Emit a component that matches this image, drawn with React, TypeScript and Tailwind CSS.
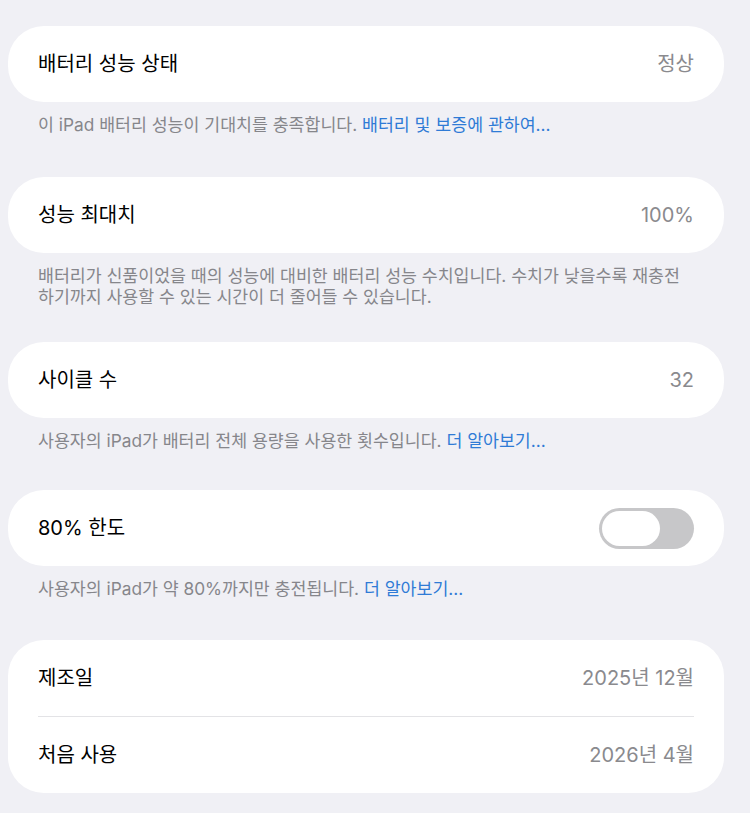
import React from "react";

const FONT = 'Inter, "Noto Sans CJK KR", "Noto Sans", sans-serif';

function Card({ children }: { children: React.ReactNode }) {
  return <div className="bg-white rounded-[36px] px-[30px]">{children}</div>;
}

function Row({ label, value, control }: { label: string; value?: string; control?: React.ReactNode }) {
  return (
    <div className="h-[76px] flex items-center justify-between">
      <span className="text-[20px] text-black">{label}</span>
      {value && <span className="text-[20px] text-[#8a8a8e]">{value}</span>}
      {control}
    </div>
  );
}

function Footer({ text, link }: { text: string; link?: string }) {
  return (
    <p className="px-[30px] pt-[12px] text-[17.3px] leading-[21px] text-[#86868b] break-keep">
      {text}
      {link && <span className="text-[#2f7bd6]"> {link}</span>}
    </p>
  );
}

function Toggle() {
  return (
    <div className="w-[95px] h-[41px] rounded-full bg-[#c7c7c9] p-[3px] flex items-center">
      <div className="w-[58px] h-[35px] rounded-full bg-white" />
    </div>
  );
}

export default function App() {
  return (
    <div className="min-h-[813px] bg-[#f0f0f5] pt-[26px] pl-[8px] pr-[26px]" style={{ fontFamily: FONT }}>
      {/* 성능 상태 */}
      <section className="mb-[42px]">
        <Card>
          <Row label="배터리 성능 상태" value="정상" />
        </Card>
        <Footer text="이 iPad 배터리 성능이 기대치를 충족합니다." link="배터리 및 보증에 관하여..." />
      </section>

      {/* 최대치 */}
      <section className="mb-[35px]">
        <Card>
          <Row label="성능 최대치" value="100%" />
        </Card>
        <Footer text="배터리가 신품이었을 때의 성능에 대비한 배터리 성능 수치입니다. 수치가 낮을수록 재충전 하기까지 사용할 수 있는 시간이 더 줄어들 수 있습니다." />
      </section>

      {/* 사이클 */}
      <section className="mb-[39px]">
        <Card>
          <Row label="사이클 수" value="32" />
        </Card>
        <Footer text="사용자의 iPad가 배터리 전체 용량을 사용한 횟수입니다." link="더 알아보기..." />
      </section>

      {/* 80% 한도 */}
      <section className="mb-[41px]">
        <Card>
          <Row label="80% 한도" control={<Toggle />} />
        </Card>
        <Footer text="사용자의 iPad가 약 80%까지만 충전됩니다." link="더 알아보기..." />
      </section>

      {/* 날짜 */}
      <Card>
        <Row label="제조일" value="2025년 12월" />
        <div className="h-px bg-[#e3e3e6]" />
        <Row label="처음 사용" value="2026년 4월" />
      </Card>
    </div>
  );
}
